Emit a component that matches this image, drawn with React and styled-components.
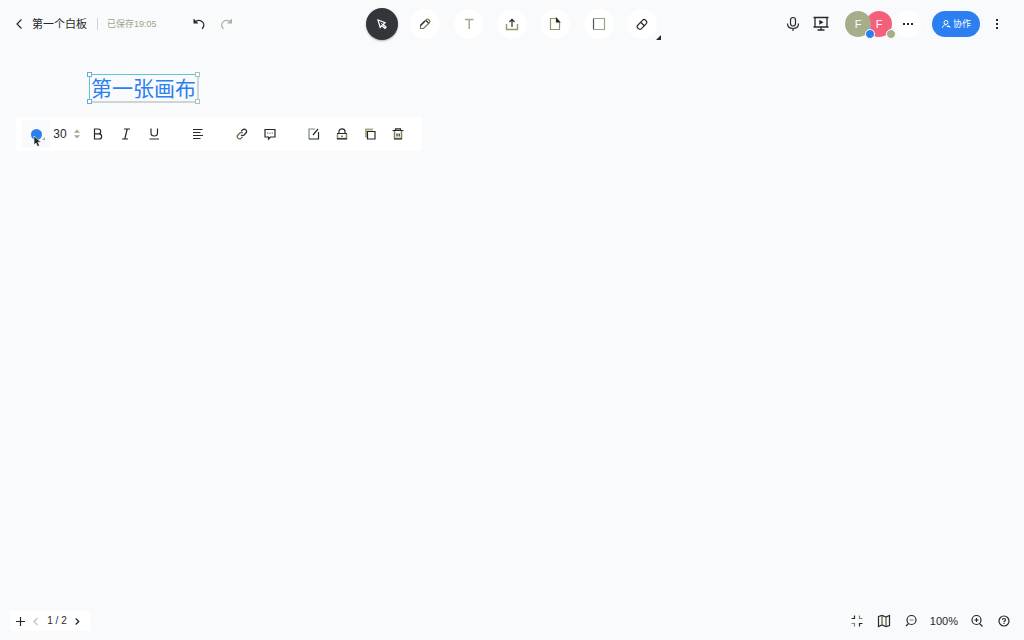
import React, { useState } from 'react';
import styled, { createGlobalStyle } from 'styled-components';

const INK = '#26292b';
const OLIVE = '#a3af86';
const BLUE = '#2b7ff0';

const GlobalStyle = createGlobalStyle`
  * {
    box-sizing: border-box;
  }

  body {
    margin: 0;
    background: #f8fafc;
    color: ${INK};
    font-family: "Liberation Sans", "Noto Sans CJK SC", sans-serif;
    font-size: 11px;
  }
`;

const Page = styled.div`
  display: flex;
  flex-direction: column;
  min-height: 100vh;
`;

const Header = styled.header`
  display: grid;
  grid-template-columns: 1fr 292px 1fr;
  align-items: center;
  height: 47px;
`;

const HeaderLeft = styled.div`
  display: flex;
  align-items: center;
  padding-left: 11px;
`;

const HeaderRight = styled.div`
  display: flex;
  align-items: center;
  justify-content: flex-end;
  padding-right: 19px;
`;

const IconButton = styled.button`
  display: flex;
  flex: none;
  align-items: center;
  justify-content: center;
  width: ${({ $width }) => $width || 16}px;
  height: 20px;
  padding: 0;
  border: 0;
  background: none;
  color: ${({ $color }) => $color || INK};
  font: inherit;
  cursor: pointer;
`;

const BoardName = styled.h1`
  margin: 0 10px 0 5px;
  font-size: 11px;
  font-weight: 400;
  line-height: 16px;
  white-space: nowrap;
`;

const Divider = styled.span`
  width: 1px;
  height: 12px;
  background: #cdd3d4;
`;

const Saved = styled.span`
  margin: 0 34px 0 9px;
  color: #9ba688;
  font-size: 9px;
  line-height: 16px;
  white-space: nowrap;
`;

const History = styled.div`
  display: flex;
  gap: 12px;
`;

const Tools = styled.nav`
  display: flex;
  align-items: center;
  justify-content: space-between;
`;

const Tool = styled.button`
  position: relative;
  display: flex;
  align-items: center;
  justify-content: center;
  width: 32px;
  height: 32px;
  padding: ${({ $active }) => ($active ? 0 : 1)}px;
  border: 0;
  border-radius: 50%;
  background: ${({ $active }) => ($active ? '#33353b' : '#fff')};
  background-clip: content-box;
  box-shadow: ${({ $active }) => ($active ? '0 1px 2px #a9b3a5' : 'none')};
  color: ${({ $active }) => ($active ? '#fff' : INK)};
  cursor: pointer;
`;

const Corner = styled.span`
  position: absolute;
  right: -3px;
  bottom: 0;
  border-bottom: 5px solid ${INK};
  border-left: 5px solid transparent;
`;

const Devices = styled.div`
  display: flex;
  gap: 12px;
  margin-right: 16px;
`;

const Avatar = styled.span`
  position: relative;
  z-index: ${({ $front }) => ($front ? 1 : 0)};
  width: 26px;
  height: 26px;
  margin-left: ${({ $front }) => ($front ? 0 : -5)}px;
  border-radius: 50%;
  background: ${({ $color }) => $color};
  color: #fff;
  font-size: 11px;
  line-height: 26px;
  text-align: center;
`;

const Status = styled.span`
  position: absolute;
  right: -4px;
  bottom: -2px;
  width: 10px;
  height: 10px;
  border: 1px solid #fff;
  border-radius: 50%;
  background: ${({ $color }) => $color};
`;

const More = styled.button`
  display: flex;
  align-items: center;
  justify-content: center;
  width: 26px;
  height: 26px;
  margin: 0 11px 0 3px;
  padding: 0;
  border: 0;
  border-radius: 50%;
  background: #fff;
  color: ${INK};
`;

const Collaborate = styled.button`
  display: flex;
  align-items: center;
  justify-content: center;
  gap: 2px;
  width: 48px;
  height: 26px;
  margin-right: 9px;
  padding: 0;
  border: 0;
  border-radius: 13px;
  background: ${BLUE};
  color: #fff;
  font: inherit;
  font-size: 9px;
  white-space: nowrap;
`;

const Canvas = styled.main`
  flex: 1;
  padding: 27px 16px 0;
`;

const TextObject = styled.div`
  position: relative;
  width: max-content;
  height: 29px;
  margin: 0 0 14px 73px;
  padding: 0 1px;
  border: solid #cbd5da;
  border-width: 1px 2px 2px 1px;
  border-top-color: #62c6d0;
  border-left-color: #62c6d0;
  color: ${BLUE};
  font-size: 21px;
  line-height: 28px;
`;

const Handle = styled.span`
  position: absolute;
  top: ${({ $bottom }) => ($bottom ? 'auto' : '-3px')};
  bottom: ${({ $bottom }) => ($bottom ? '-3px' : 'auto')};
  left: ${({ $right }) => ($right ? 'auto' : '-3px')};
  right: ${({ $right }) => ($right ? '-3px' : 'auto')};
  width: 5px;
  height: 5px;
  border: 1px solid ${({ $right }) => ($right ? '#a9bfc5' : '#6badd6')};
  background: #fff;
`;

const FormatBar = styled.div`
  display: flex;
  align-items: center;
  gap: 16px;
  width: max-content;
  height: 34px;
  padding: 0 10px 0 6px;
  border-radius: 2px;
  background: #fff;
`;

const Group = styled.div`
  display: flex;
  align-items: center;
`;

const ColorButton = styled.button`
  position: relative;
  display: flex;
  align-items: center;
  justify-content: center;
  width: 28px;
  height: 28px;
  padding: 0;
  border: 0;
  border-radius: 2px;
  background: #f8fafb;
`;

const Swatch = styled.span`
  width: 11px;
  height: 11px;
  border-radius: 50%;
  background: ${BLUE};
`;

const SwatchCorner = styled.span`
  position: absolute;
  right: 5px;
  bottom: 8px;
  border-bottom: 3px solid ${OLIVE};
  border-left: 3px solid transparent;
`;

const Pointer = styled.svg`
  position: absolute;
  top: 14px;
  left: 11px;
`;

const SizeInput = styled.input`
  width: 20px;
  height: 20px;
  padding: 0;
  border: 0;
  background: none;
  color: ${INK};
  font: inherit;
  font-size: 12px;
  text-align: center;
`;

const Footer = styled.footer`
  display: flex;
  align-items: center;
  justify-content: space-between;
  height: 38px;
  padding: 0 12px 0 10px;
`;

const Pager = styled.div`
  display: flex;
  align-items: center;
  height: 20px;
  padding: 0 6px 0 2px;
  background: #fff;
`;

const PageCount = styled.span`
  width: 26px;
  font-size: 10px;
  line-height: 16px;
  text-align: center;
  white-space: nowrap;
`;

const ViewTools = styled.div`
  display: flex;
  align-items: center;
  gap: 11px;
`;

const Zoom = styled.span`
  font-size: 11px;
  line-height: 16px;
`;

const icons = {
  back: <path d="M10.500 3.500 6 8l4.500 4.500" />,
  undo: (
    <>
      <path d="M4.500 5.500C8 3.500 11 4.500 12.300 7c1 2 .6 4-1.300 5.800" />
      <path d="M2.500 2.500v5h5z" fill="currentColor" stroke="none" />
    </>
  ),
  redo: (
    <>
      <path d="M11 5.500C7.500 3.500 4.500 4.500 3.200 7c-1 2-.6 4 1.300 5.800" />
      <path d="M13 2.500v5H8z" fill="currentColor" stroke="none" />
    </>
  ),
  cursor: (
    <>
      <path d="m4 4 2.200 7.500 1.600-2 3 3 1.300-1.300-3-3 2-1.600z" />
      <path d="m7 7 3.500 3.500" strokeWidth=".8" />
    </>
  ),
  pencil: (
    <>
      <path d="M3.500 12.500v-3L9.300 3.600c.8-.8 1.500-.8 2.200-.1l1 1c.7.7.7 1.500-.1 2.200L6.500 12.500z" stroke="#6d7a50" />
      <path d="M3.500 9.500 8 5M9 4.500 11.500 7" />
    </>
  ),
  text: <path d="M4 3.500h8.500M8.200 3.500V13" stroke="#a3ab92" strokeWidth="1.500" />,
  upload: (
    <>
      <path d="M2.500 8v5.500h11V8" stroke="#8c9a6d" strokeWidth="1.400" />
      <path d="M8 11V3.500M5.500 6 8 3.300 10.500 6" />
    </>
  ),
  page: (
    <>
      <path d="M9.500 2.500h-6v11h9v-8" stroke="#8c9871" />
      <path d="m9.500 2.500 3 3.500h-3z" fill={INK} />
    </>
  ),
  shape: (
    <>
      <path d="M3 2.500h10.500v11H3" stroke="#97a480" />
      <path d="M2.500 2.500v11" stroke="#4a5960" />
    </>
  ),
  eraser: (
    <>
      <path d="m3.500 9.500 5-5.200c1-1 2-1 2.800-.3l1 1c.8.8.8 1.800 0 2.700l-4.800 5c-1 1-1.800 1-2.700.2L3.500 11.800c-.7-.7-.7-1.500 0-2.300z" />
      <path d="m7 6.500 3.500 3.500" />
    </>
  ),
  mic: (
    <>
      <rect x="5.500" y="1.500" width="5" height="8.500" rx="2.500" />
      <path d="M2.500 7.500c0 3 2.200 5 5.500 5s5.500-2 5.500-5M8 12.500V15" />
    </>
  ),
  present: (
    <>
      <path d="M.5 1.500h15M2 1.500v9.500h12V1.500M.5 11h15M8 11v3M4.500 14h7" strokeWidth="1.300" />
      <path d="m6.300 3.800 4.200 2.500-4.200 2.500z" fill={INK} stroke="none" />
    </>
  ),
  dots: <path d="M3 8h2M7 8h2M11 8h2" strokeWidth="1.800" />,
  kebab: <path d="M8 3v2M8 7v2M8 11v2" strokeWidth="2" />,
  user: (
    <>
      <circle cx="8" cy="5.500" r="3.200" strokeWidth="1.600" />
      <path d="M2.500 14c0-3 2-4.800 5.500-4.800M9 12h5.500M11.500 10l3 4" strokeWidth="1.600" />
    </>
  ),
  spinner: (
    <path d="m4.500 6.500 3.500-3.700 3.500 3.700zM4.500 9.500l3.500 3.700 3.500-3.700z" fill="#a1aa91" stroke="none" />
  ),
  bold: <path d="M4.500 3v10h4.300c3.800 0 3.800-5.200 0-5.200H4.500h3.800c3.200 0 3.200-4.800 0-4.800H4.500z" />,
  italic: <path d="M6 3h6M4 13h6M9.200 3 6.800 13" />,
  underline: <path d="M5 2.500V7c0 4 6.500 4 6.500 0V2.500M3.500 13h9.500" />,
  align: <path d="M3 3.500h9.500M3 6.500h7.500M3 9.500h10M3 12.500h7.500" />,
  link: (
    <>
      <path d="m7.200 5.300 1.500-1.500c2.200-2 5.200 1 3.200 3.200L10 9C9.200 9.700 7.900 9.700 7.100 9" />
      <path d="m8.500 10.800-1.400 1.400c-2.200 2-5.200-1-3.200-3.200L5.900 7C6.700 6.300 8 6.300 8.800 7" stroke="#5d6c45" />
    </>
  ),
  comment: (
    <>
      <path d="M3 3.500h10v7.500H8.500l-2 2v-2H3z" />
      <path d="M5 7.200h1.300M7.300 7.200h1.300M9.600 7.200h1.300" stroke="#7e8b60" />
    </>
  ),
  edit: (
    <>
      <path d="M9 3H3v10" stroke="#778a8b" />
      <path d="M3 13h9.500V6M7 9l5-6" />
    </>
  ),
  lock: (
    <>
      <path d="M3.500 7.500v5h9v-5" stroke="#8b986c" strokeWidth="1.600" />
      <path d="M3 7.500h10M3 12.800h10M5 7V5.500c0-3.500 6-3.500 6 0V7M8 9.500V11" />
    </>
  ),
  copy: (
    <>
      <path d="M4 11.500V3.500h7" stroke={OLIVE} strokeWidth="2" />
      <path d="M5.500 5.500h7.500v7.500H5.500z" fill="#fff" />
    </>
  ),
  trash: (
    <>
      <path d="M4.500 5v7.500h7V5" stroke="#78865b" strokeWidth="1.500" />
      <path d="M2.500 4.500h11M5.500 4V2.800h5V4M4 13h8M7 7.500v3M9.200 7.500v3" />
    </>
  ),
  plus: <path d="M8.500 4v9M4 8.500h9" />,
  prev: <path d="M9.500 5 6 8.500 9.500 12" />,
  next: <path d="M6.500 5 10 8.500 6.500 12" strokeWidth="1.500" />,
  collapse: (
    <>
      <path d="M5.500 2.500v3h-3M10.500 13.500v-3h3" />
      <path d="M10.500 2.500v3h3M5.500 13.500v-3h-3" stroke="#7c8a6d" />
    </>
  ),
  map: (
    <>
      <path d="m2.500 3.500 3.500-1 4 1.500 3.500-1.500v10L10 13.500 6 12l-3.500 1.500z" />
      <path d="M6 3v9M10 4v9" stroke="#66734b" strokeWidth="1.400" />
    </>
  ),
  zoomOut: (
    <>
      <circle cx="8.500" cy="7" r="4.500" />
      <path d="M5.500 10.500 3 13" />
      <path d="M6.500 7h4" stroke="#8b986c" />
    </>
  ),
  zoomIn: (
    <>
      <circle cx="7.500" cy="7" r="4.500" />
      <path d="m10.500 10.500 3 3M5.500 7h4M7.500 5v4" />
    </>
  ),
  help: (
    <>
      <circle cx="8" cy="8" r="5" />
      <path d="M6.500 7c0-2 3-2 3 0 0 1-1.500 1-1.500 2.200M8 10v1" />
    </>
  ),
};

const Icon = ({ name, size = 16 }) => (
  <svg
    width={size}
    height={size}
    viewBox="0 0 16 16"
    fill="none"
    stroke="currentColor"
    strokeWidth="1.2"
    aria-hidden="true"
  >
    {icons[name]}
  </svg>
);

const tools = [
  { name: 'cursor', label: '选择' },
  { name: 'pencil', label: '画笔' },
  { name: 'text', label: '文本' },
  { name: 'upload', label: '上传' },
  { name: 'page', label: '文档' },
  { name: 'shape', label: '形状' },
  { name: 'eraser', label: '橡皮擦' },
];

const formatGroups = [
  [['align', '对齐']],
  [['link', '链接'], ['comment', '评论']],
  [['edit', '编辑'], ['lock', '锁定'], ['copy', '复制'], ['trash', '删除']],
];

const App = () => {
  const [active, setActive] = useState('cursor');
  const [fontSize, setFontSize] = useState('30');

  return (
    <Page>
      <GlobalStyle />
      <Header>
        <HeaderLeft>
          <IconButton aria-label="返回"><Icon name="back" /></IconButton>
          <BoardName>第一个白板</BoardName>
          <Divider />
          <Saved>已保存19:05</Saved>
          <History>
            <IconButton aria-label="撤销"><Icon name="undo" /></IconButton>
            <IconButton aria-label="重做" $color="#a9b4a0"><Icon name="redo" /></IconButton>
          </History>
        </HeaderLeft>
        <Tools>
          {tools.map(({ name, label }) => (
            <Tool
              key={name}
              aria-label={label}
              $active={active === name}
              onClick={() => setActive(name)}
            >
              <Icon name={name} />
              {name === 'eraser' && <Corner />}
            </Tool>
          ))}
        </Tools>
        <HeaderRight>
          <Devices>
            <IconButton aria-label="麦克风"><Icon name="mic" /></IconButton>
            <IconButton aria-label="演示"><Icon name="present" /></IconButton>
          </Devices>
          <Avatar $front $color="#a5ae8b">
            F
            <Status $color={BLUE} />
          </Avatar>
          <Avatar $color="#f65f7c">
            F
            <Status $color={OLIVE} />
          </Avatar>
          <More aria-label="更多成员"><Icon name="dots" /></More>
          <Collaborate>
            <Icon name="user" size={10} />
            协作
          </Collaborate>
          <IconButton aria-label="菜单"><Icon name="kebab" /></IconButton>
        </HeaderRight>
      </Header>

      <Canvas>
        <TextObject>
          第一张画布
          <Handle />
          <Handle $right />
          <Handle $bottom />
          <Handle $right $bottom />
        </TextObject>
        <FormatBar>
          <Group>
            <ColorButton aria-label="颜色">
              <Swatch />
              <SwatchCorner />
              <Pointer width="10" height="14" viewBox="0 0 10 14">
                <path
                  d="M1 2v9l2-2 1.500 3.500 2-1L5 8.300h3z"
                  fill={INK}
                  stroke="#fff"
                  strokeWidth=".6"
                />
              </Pointer>
            </ColorButton>
            <SizeInput
              aria-label="字号"
              value={fontSize}
              onChange={e => setFontSize(e.target.value)}
            />
            <IconButton aria-label="调整字号" $width={14}><Icon name="spinner" /></IconButton>
            <IconButton aria-label="加粗" $width={28}><Icon name="bold" /></IconButton>
            <IconButton aria-label="斜体" $width={28}><Icon name="italic" /></IconButton>
            <IconButton aria-label="下划线" $width={28}><Icon name="underline" /></IconButton>
          </Group>
          {formatGroups.map(group => (
            <Group key={group[0][0]}>
              {group.map(([name, label]) => (
                <IconButton key={name} aria-label={label} $width={28}>
                  <Icon name={name} />
                </IconButton>
              ))}
            </Group>
          ))}
        </FormatBar>
      </Canvas>

      <Footer>
        <Pager>
          <IconButton aria-label="新建画布"><Icon name="plus" /></IconButton>
          <IconButton aria-label="上一页" $color="#b9c6c4"><Icon name="prev" /></IconButton>
          <PageCount>1 / 2</PageCount>
          <IconButton aria-label="下一页" $width={14}><Icon name="next" /></IconButton>
        </Pager>
        <ViewTools>
          <IconButton aria-label="收起"><Icon name="collapse" /></IconButton>
          <IconButton aria-label="地图"><Icon name="map" /></IconButton>
          <IconButton aria-label="缩小"><Icon name="zoomOut" /></IconButton>
          <Zoom>100%</Zoom>
          <IconButton aria-label="放大"><Icon name="zoomIn" /></IconButton>
          <IconButton aria-label="帮助"><Icon name="help" /></IconButton>
        </ViewTools>
      </Footer>
    </Page>
  );
};

export default App;
